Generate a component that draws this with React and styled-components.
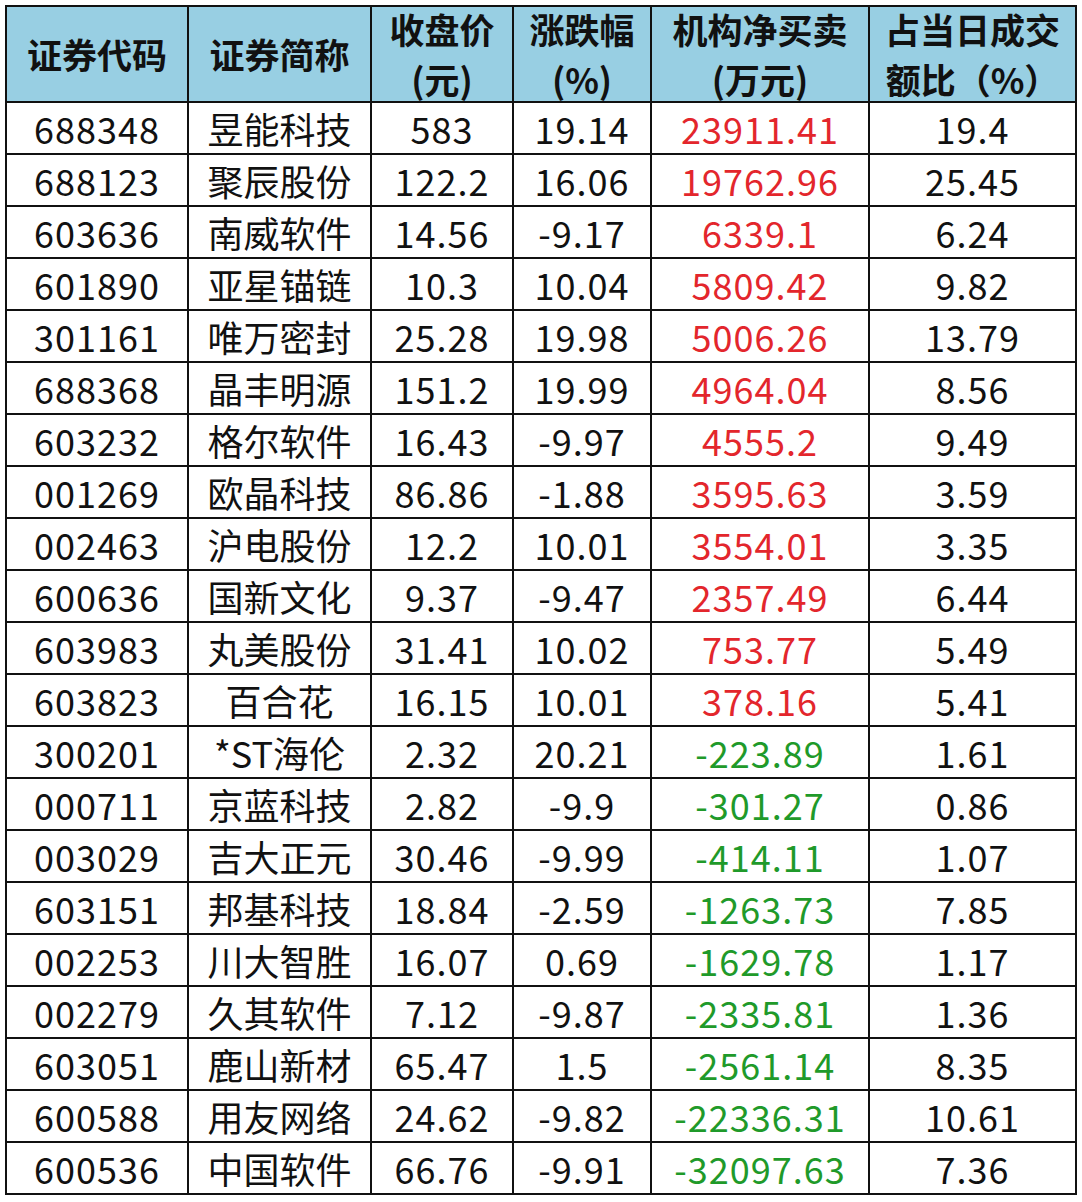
import React from 'react'
import styled, { createGlobalStyle } from 'styled-components'

const GlobalStyle = createGlobalStyle`
  html, body {
    margin: 0;
    padding: 0;
    background: #ffffff;
  }
  body {
    font-family: "Noto Sans CJK SC", "Noto Sans", sans-serif;
  }
`

const rows = [
  ['688348', '昱能科技', '583', '19.14', '23911.41', '19.4'],
  ['688123', '聚辰股份', '122.2', '16.06', '19762.96', '25.45'],
  ['603636', '南威软件', '14.56', '-9.17', '6339.1', '6.24'],
  ['601890', '亚星锚链', '10.3', '10.04', '5809.42', '9.82'],
  ['301161', '唯万密封', '25.28', '19.98', '5006.26', '13.79'],
  ['688368', '晶丰明源', '151.2', '19.99', '4964.04', '8.56'],
  ['603232', '格尔软件', '16.43', '-9.97', '4555.2', '9.49'],
  ['001269', '欧晶科技', '86.86', '-1.88', '3595.63', '3.59'],
  ['002463', '沪电股份', '12.2', '10.01', '3554.01', '3.35'],
  ['600636', '国新文化', '9.37', '-9.47', '2357.49', '6.44'],
  ['603983', '丸美股份', '31.41', '10.02', '753.77', '5.49'],
  ['603823', '百合花', '16.15', '10.01', '378.16', '5.41'],
  ['300201', '*ST海伦', '2.32', '20.21', '-223.89', '1.61'],
  ['000711', '京蓝科技', '2.82', '-9.9', '-301.27', '0.86'],
  ['003029', '吉大正元', '30.46', '-9.99', '-414.11', '1.07'],
  ['603151', '邦基科技', '18.84', '-2.59', '-1263.73', '7.85'],
  ['002253', '川大智胜', '16.07', '0.69', '-1629.78', '1.17'],
  ['002279', '久其软件', '7.12', '-9.87', '-2335.81', '1.36'],
  ['603051', '鹿山新材', '65.47', '1.5', '-2561.14', '8.35'],
  ['600588', '用友网络', '24.62', '-9.82', '-22336.31', '10.61'],
  ['600536', '中国软件', '66.76', '-9.91', '-32097.63', '7.36'],
]

const headers = [
  ['证券代码'],
  ['证券简称'],
  ['收盘价', '(元)'],
  ['涨跌幅', '(%)'],
  ['机构净买卖', '(万元)'],
  ['占当日成交', '额比（%）'],
]

const widths = [182, 183, 142, 138, 218, 207]

const Page = styled.div`
  padding: 5px;
`

const Sheet = styled.table`
  border-collapse: collapse;
  table-layout: fixed;
  width: 1070px;
  border: 2px solid #111;
`

const HeadCell = styled.th`
  background: #98cfe3;
  border: 2px solid #111;
  padding: 0;
  color: #111;
  text-align: center;
  vertical-align: middle;
`

const HeadBox = styled.div`
  height: 94px;
  display: flex;
  flex-direction: column;
  justify-content: center;
  align-items: center;
  font-size: 35px;
  font-weight: 700;
  line-height: 50px;
`

const Cell = styled.td`
  border: 2px solid #111;
  height: 50px;
  padding: 0;
  font-size: 36px;
  line-height: 50px;
  text-align: center;
  vertical-align: middle;
  white-space: nowrap;
  letter-spacing: ${p => (p.$num ? '1px' : '0')};
  color: ${p => (p.$tone === 'up' ? '#e3262c' : p.$tone === 'down' ? '#1f9a2a' : '#111')};
`

const Line = styled.div`
  white-space: nowrap;
`

export default function App() {
  return (
    <>
      <GlobalStyle />
      <Page>
        <Sheet>
          <colgroup>
            {widths.map((w, i) => (
              <col key={i} style={{ width: w }} />
            ))}
          </colgroup>
          <thead>
            <tr>
              {headers.map((h, i) => (
                <HeadCell key={i}>
                  <HeadBox>
                    {h.map((l, j) => (
                      <Line key={j}>{l}</Line>
                    ))}
                  </HeadBox>
                </HeadCell>
              ))}
            </tr>
          </thead>
          <tbody>
            {rows.map(r => (
              <tr key={r[0]}>
                {r.map((v, i) => (
                  <Cell
                    key={i}
                    $num={i !== 1}
                    $tone={i === 4 ? (v.startsWith('-') ? 'down' : 'up') : undefined}
                  >
                    {v}
                  </Cell>
                ))}
              </tr>
            ))}
          </tbody>
        </Sheet>
      </Page>
    </>
  )
}
